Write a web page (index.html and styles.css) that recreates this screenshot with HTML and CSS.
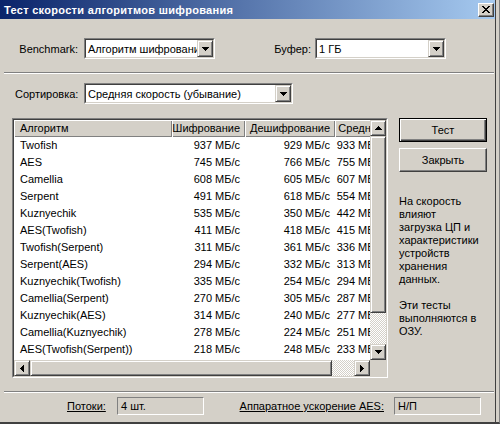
FILE: index.html
```html
<!DOCTYPE html>
<html>
<head>
<meta charset="utf-8">
<link rel="stylesheet" href="styles.css">
</head>
<body>
<div class="window">
  <div class="titlebar">
    <span class="title">Тест скорости алгоритмов шифрования</span>
    <span class="close-btn"><svg width="8" height="7" viewBox="0 0 8 7"><path d="M0 0h2v1h-2zM6 0h2v1h-2zM1 1h2v1h-2zM5 1h2v1h-2zM2 2h4v1h-4zM3 3h2v1h-2zM2 4h4v1h-4zM1 5h2v1h-2zM5 5h2v1h-2zM0 6h2v1h-2zM6 6h2v1h-2z" fill="#000"/></svg></span>
  </div>

  <div class="row row-top">
    <span class="lbl lbl-bench">Benchmark:</span>
    <div class="combo combo-bench">
      <div class="combo-in">
        <span class="combo-text">Алгоритм шифрования</span>
        <span class="drop"><svg width="7" height="4" viewBox="0 0 7 4"><path d="M0 0h7v1h-7zM1 1h5v1h-5zM2 2h3v1h-3zM3 3h1v1h-1z" fill="#000"/></svg></span>
      </div>
    </div>
    <span class="lbl lbl-buf">Буфер:</span>
    <div class="combo combo-buf">
      <div class="combo-in">
        <span class="combo-text">1 ГБ</span>
        <span class="drop"><svg width="7" height="4" viewBox="0 0 7 4"><path d="M0 0h7v1h-7zM1 1h5v1h-5zM2 2h3v1h-3zM3 3h1v1h-1z" fill="#000"/></svg></span>
      </div>
    </div>
  </div>

  <div class="sep sep-top"></div>

  <div class="row row-sort">
    <span class="lbl lbl-sort">Сортировка:</span>
    <div class="combo combo-sort">
      <div class="combo-in">
        <span class="combo-text">Средняя скорость (убывание)</span>
        <span class="drop"><svg width="7" height="4" viewBox="0 0 7 4"><path d="M0 0h7v1h-7zM1 1h5v1h-5zM2 2h3v1h-3zM3 3h1v1h-1z" fill="#000"/></svg></span>
      </div>
    </div>
  </div>

  <div class="main">
    <div class="list">
      <div class="list-in">
        <div class="table">
          <div class="thead">
            <span class="th th-name">Алгоритм</span>
            <span class="th">Шифрование</span>
            <span class="th">Дешифрование</span>
            <span class="th">Среднее</span>
          </div>
          <div class="tr"><span class="td td-name">Twofish</span><span class="td">937 МБ/с</span><span class="td">929 МБ/с</span><span class="td">933 МБ/с</span></div>
          <div class="tr"><span class="td td-name">AES</span><span class="td">745 МБ/с</span><span class="td">766 МБ/с</span><span class="td">755 МБ/с</span></div>
          <div class="tr"><span class="td td-name">Camellia</span><span class="td">608 МБ/с</span><span class="td">605 МБ/с</span><span class="td">607 МБ/с</span></div>
          <div class="tr"><span class="td td-name">Serpent</span><span class="td">491 МБ/с</span><span class="td">618 МБ/с</span><span class="td">554 МБ/с</span></div>
          <div class="tr"><span class="td td-name">Kuznyechik</span><span class="td">535 МБ/с</span><span class="td">350 МБ/с</span><span class="td">442 МБ/с</span></div>
          <div class="tr"><span class="td td-name">AES(Twofish)</span><span class="td">411 МБ/с</span><span class="td">418 МБ/с</span><span class="td">415 МБ/с</span></div>
          <div class="tr"><span class="td td-name">Twofish(Serpent)</span><span class="td">311 МБ/с</span><span class="td">361 МБ/с</span><span class="td">336 МБ/с</span></div>
          <div class="tr"><span class="td td-name">Serpent(AES)</span><span class="td">294 МБ/с</span><span class="td">332 МБ/с</span><span class="td">313 МБ/с</span></div>
          <div class="tr"><span class="td td-name">Kuznyechik(Twofish)</span><span class="td">335 МБ/с</span><span class="td">254 МБ/с</span><span class="td">294 МБ/с</span></div>
          <div class="tr"><span class="td td-name">Camellia(Serpent)</span><span class="td">270 МБ/с</span><span class="td">305 МБ/с</span><span class="td">287 МБ/с</span></div>
          <div class="tr"><span class="td td-name">Kuznyechik(AES)</span><span class="td">314 МБ/с</span><span class="td">240 МБ/с</span><span class="td">277 МБ/с</span></div>
          <div class="tr"><span class="td td-name">Camellia(Kuznyechik)</span><span class="td">278 МБ/с</span><span class="td">224 МБ/с</span><span class="td">251 МБ/с</span></div>
          <div class="tr"><span class="td td-name">AES(Twofish(Serpent))</span><span class="td">218 МБ/с</span><span class="td">248 МБ/с</span><span class="td">233 МБ/с</span></div>
        </div>
        <div class="vscroll">
          <span class="sbtn"><svg width="7" height="4" viewBox="0 0 7 4"><path d="M3 0h1v1h-1zM2 1h3v1h-3zM1 2h5v1h-5zM0 3h7v1h-7z" fill="#000"/></svg></span>
          <span class="vthumb"></span>
          <span class="track"></span>
          <span class="sbtn"><svg width="7" height="4" viewBox="0 0 7 4"><path d="M0 0h7v1h-7zM1 1h5v1h-5zM2 2h3v1h-3zM3 3h1v1h-1z" fill="#000"/></svg></span>
        </div>
        <div class="hscroll">
          <span class="sbtn"><svg width="4" height="7" viewBox="0 0 4 7"><path d="M3 0h1v7h-1zM2 1h1v5h-1zM1 2h1v3h-1zM0 3h1v1h-1z" fill="#000"/></svg></span>
          <span class="hthumb"></span>
          <span class="track"></span>
          <span class="sbtn"><svg width="4" height="7" viewBox="0 0 4 7"><path d="M0 0h1v7h-1zM1 1h1v5h-1zM2 2h1v3h-1zM3 3h1v1h-1z" fill="#000"/></svg></span>
        </div>
        <div class="corner"></div>
      </div>
    </div>

    <div class="side">
      <div class="btn btn-default">Тест</div>
      <div class="btn">Закрыть</div>
      <div class="note">На скорость<br>влияют<br>загрузка ЦП и<br>характеристики<br>устройств<br>хранения<br>данных.<br><br>Эти тесты<br>выполняются в<br>ОЗУ.</div>
    </div>
  </div>

  <div class="sep sep-bottom"></div>

  <div class="row row-bottom">
    <span class="lbl lbl-threads">Потоки:</span>
    <span class="field">4 шт.</span>
    <span class="lbl lbl-aes">Аппаратное ускорение AES:</span>
    <span class="field">Н/П</span>
  </div>
</div>
<div class="edge"></div>
</body>
</html>
```
FILE: styles.css
```css
* { box-sizing: border-box; }
html, body { margin: 0; padding: 0; }
body {
  width: 500px;
  height: 424px;
  overflow: hidden;
  background: #d4d0c8;
  display: flex;
  font-family: "Liberation Sans", Arial, sans-serif;
  font-size: 11px;
  color: #000;
}
.window {
  width: 496px;
  height: 424px;
  flex-shrink: 0;
  border-right: 1px solid #404040;
  border-bottom: 2px solid #404040;
  background: #d4d0c8;
  display: flex;
  flex-direction: column;
}
.edge {
  flex: 1;
  height: 424px;
  border-right: 1px solid #808080;
  border-bottom: 2px solid #404040;
}

/* title bar */
.titlebar {
  height: 19px;
  flex-shrink: 0;
  background: linear-gradient(to right, #0a246a, #a6caf0);
  display: flex;
  align-items: center;
  justify-content: space-between;
  padding: 0 1px 0 4px;
}
.title {
  color: #fff;
  font-weight: bold;
  letter-spacing: 0.3px;
  white-space: nowrap;
}
.close-btn {
  width: 16px;
  height: 14px;
  background: #d4d0c8;
  border: 1px solid;
  border-color: #fff #404040 #404040 #fff;
  box-shadow: inset -1px -1px #808080;
  display: flex;
  align-items: center;
  justify-content: center;
}

/* rows */
.row {
  display: flex;
  align-items: center;
  flex-shrink: 0;
}
.row-top { margin-top: 19px; height: 21px; }
.row-sort { margin-top: 9px; height: 21px; padding-left: 15px; }
.lbl { white-space: nowrap; }
.lbl-bench { width: 78px; text-align: right; margin-right: 6px; }
.lbl-buf { width: 96px; text-align: right; margin-right: 4px; }
.lbl-sort { width: 69px; }

.combo {
  height: 21px;
  border: 1px solid;
  border-color: #808080 #fff #fff #808080;
  background: #fff;
  display: flex;
}
.combo-bench, .combo-buf { width: 131px; }
.combo-sort { width: 209px; }
.combo-in {
  flex: 1;
  display: flex;
  align-items: center;
  border: 1px solid;
  border-color: #404040 #d4d0c8 #d4d0c8 #404040;
  min-width: 0;
}
.combo-text {
  flex: 1;
  min-width: 0;
  overflow: hidden;
  white-space: nowrap;
  padding-left: 2px;
}
.drop {
  width: 16px;
  height: 17px;
  flex-shrink: 0;
  background: #d4d0c8;
  border: 1px solid;
  border-color: #d4d0c8 #404040 #404040 #d4d0c8;
  box-shadow: inset 1px 1px #fff, inset -1px -1px #808080;
  display: flex;
  align-items: center;
  justify-content: center;
}

.sep {
  height: 2px;
  flex-shrink: 0;
  margin: 0 1px 0 4px;
  border-top: 1px solid #808080;
  border-bottom: 1px solid #fff;
}
.sep-top { margin-top: 13px; }
.sep-bottom { margin-top: 13px; }

/* main area */
.main {
  margin-top: 14px;
  height: 260px;
  flex-shrink: 0;
  display: flex;
  padding-left: 12px;
}
.list {
  width: 376px;
  height: 260px;
  border: 1px solid;
  border-color: #808080 #fff #fff #808080;
}
.list-in {
  width: 100%;
  height: 100%;
  border: 1px solid;
  border-color: #404040 #d4d0c8 #d4d0c8 #404040;
  background: #fff;
  display: grid;
  grid-template-columns: 356px 16px;
  grid-template-rows: 240px 16px;
}
.table {
  overflow: hidden;
  background: #fff;
}
.thead, .tr {
  display: grid;
  grid-template-columns: 158px 73px 90px 53px;
  width: 374px;
  height: 17px;
  line-height: 17px;
}
.th {
  background: #d4d0c8;
  box-shadow: inset 1px 1px #fff, inset -1px -1px #808080;
  text-align: right;
  padding-right: 5px;
  white-space: nowrap;
  overflow: hidden;
}
.th-name { text-align: left; padding-left: 6px; }
.td {
  text-align: right;
  padding-right: 5px;
  white-space: nowrap;
  overflow: hidden;
}
.td-name { text-align: left; padding-left: 6px; }

.vscroll {
  display: flex;
  flex-direction: column;
}
.hscroll {
  display: flex;
}
.sbtn {
  width: 16px;
  height: 16px;
  flex-shrink: 0;
  background: #d4d0c8;
  border: 1px solid;
  border-color: #d4d0c8 #404040 #404040 #d4d0c8;
  box-shadow: inset 1px 1px #fff, inset -1px -1px #808080;
  display: flex;
  align-items: center;
  justify-content: center;
}
.vthumb, .hthumb {
  flex-shrink: 0;
  background: #d4d0c8;
  border: 1px solid;
  border-color: #d4d0c8 #404040 #404040 #d4d0c8;
  box-shadow: inset 1px 1px #fff, inset -1px -1px #808080;
}
.vthumb { height: 177px; }
.hthumb { width: 302px; }
.track {
  flex: 1;
  background: repeating-conic-gradient(#fff 0 25%, #d4d0c8 0 50%) 0 0 / 2px 2px;
}
.corner { background: #d4d0c8; }

.side {
  margin-left: 11px;
  width: 88px;
  display: flex;
  flex-direction: column;
}
.btn {
  height: 24px;
  flex-shrink: 0;
  background: #d4d0c8;
  border: 1px solid;
  border-color: #fff #404040 #404040 #fff;
  box-shadow: inset -1px -1px #808080;
  display: flex;
  align-items: center;
  justify-content: center;
}
.btn-default {
  border: 1px solid #000;
  box-shadow: inset 1px 1px #fff, inset -1px -1px #404040, inset -2px -2px #808080;
}
.btn + .btn { margin-top: 6px; }
.note {
  margin-top: 23px;
  line-height: 13px;
  white-space: nowrap;
}

/* bottom row */
.row-bottom {
  margin-top: 4px;
  height: 18px;
  padding-left: 67px;
}
.lbl-threads { width: 50px; text-decoration: underline; }
.lbl-aes { width: 190px; text-align: right; padding-right: 10px; text-decoration: underline; }
.field {
  width: 87px;
  height: 18px;
  border: 1px solid;
  border-color: #808080 #fff #fff #808080;
  padding-left: 3px;
  line-height: 16px;
  white-space: nowrap;
}
```
